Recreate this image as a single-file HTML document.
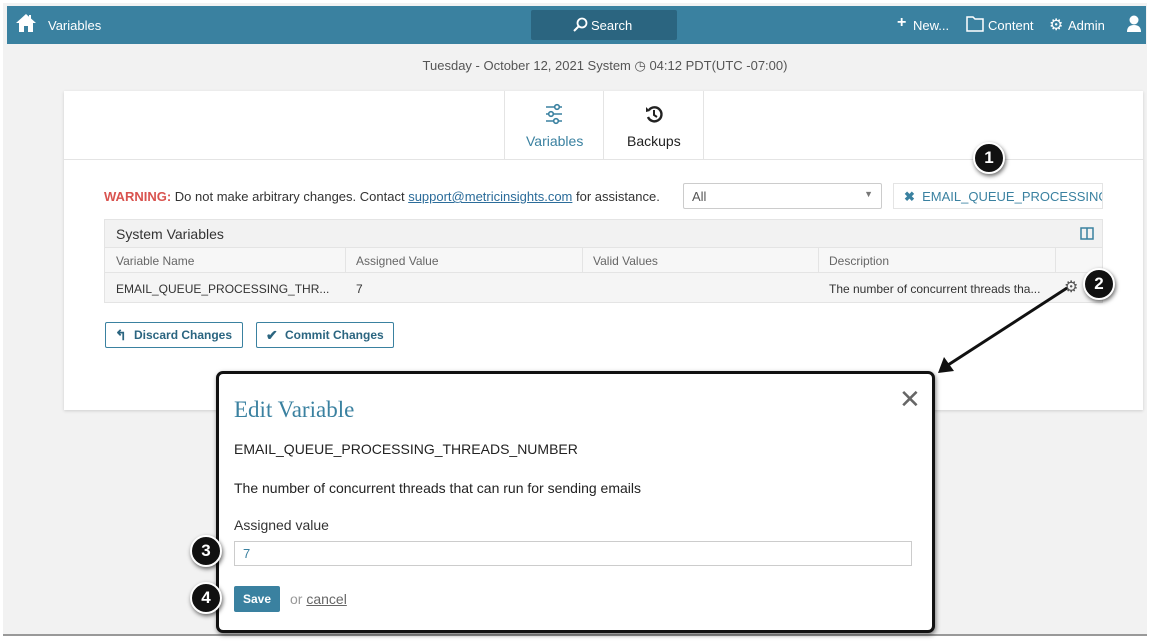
<!DOCTYPE html>
<html><head><style>
*{box-sizing:border-box;margin:0;padding:0}
body{width:1151px;height:642px;overflow:hidden;background:#fff;font-family:"Liberation Sans",sans-serif;position:relative}
.frame{position:absolute;left:3px;top:3px;width:1144px;height:633px;background:#f2f2f2;border-bottom:2px solid #999}
.nav{position:absolute;left:7px;top:6px;width:1139px;height:38px;background:#3a81a0;color:#fff;font-size:13px}
.nav span{position:absolute;top:12px}
.search{position:absolute;left:524px;top:4px;width:146px;height:30px;background:#2b6580;border-radius:2px}
.abs{position:absolute}
.card{position:absolute;left:64px;top:91px;width:1079px;height:319px;background:#fff;box-shadow:0 1px 3px rgba(0,0,0,.15)}
.circ{position:absolute;width:32px;height:32px;border-radius:50%;background:#111;border:2px solid #fff;box-shadow:1px 2px 4px rgba(0,0,0,.6);color:#fff;font-weight:bold;font-size:17px;text-align:center;line-height:28px}
.btn{position:absolute;height:26px;border:1px solid #3a81a0;border-radius:2px;color:#2b6580;font-size:12px;font-weight:bold;line-height:24px;padding-left:28px;background:#fff}
</style></head><body>
<div class="frame"></div>
<div class="nav">
<svg class="abs" style="left:8px;top:7px" width="22" height="20" viewBox="0 0 22 20"><path d="M11 1 L1 10 L4 10 L4 19 L9 19 L9 13 L13 13 L13 19 L18 19 L18 10 L21 10 L16 5.5 L16 2 L14 2 L14 3.7Z" fill="#fff"/></svg>
<span style="left:41px">Variables</span>
<div class="search"><svg class="abs" style="left:41px;top:7px" width="16" height="16"><circle cx="10" cy="6" r="4.5" stroke="#fff" stroke-width="1.8" fill="none"/><path d="M7 9 L2 14" stroke="#fff" stroke-width="2"/></svg><span style="left:60px;top:8px;position:absolute">Search</span></div>
<span style="left:890px;font-size:16px;top:8px;font-weight:bold">+</span><span style="left:906px">New...</span>
<svg class="abs" style="left:959px;top:10px" width="18" height="16"><path d="M1 1h6l2 2h8v12H1z" stroke="#fff" stroke-width="1.5" fill="none"/></svg><span style="left:981px">Content</span>
<span style="left:1042px;top:9px;font-size:16px">⚙</span><span style="left:1061px">Admin</span>
<svg class="abs" style="left:1119px;top:9px" width="16" height="18"><circle cx="8" cy="5" r="4.5" fill="#fff"/><path d="M1 17 Q1 10 8 10 Q15 10 15 17Z" fill="#fff"/></svg>
</div>
<div class="abs" style="left:0;width:1210px;text-align:center;top:58px;font-size:13px;color:#555">Tuesday - October 12, 2021 System ◷ 04:12 PDT(UTC -07:00)</div>
<div class="card">
<div class="abs" style="left:0;top:68px;width:1079px;border-top:1px solid #e4e4e4"></div>
<div class="abs" style="left:440px;top:0;width:1px;height:68px;background:#e4e4e4"></div>
<div class="abs" style="left:539px;top:0;width:1px;height:68px;background:#e4e4e4"></div>
<div class="abs" style="left:639px;top:0;width:1px;height:68px;background:#e4e4e4"></div>
<svg class="abs" style="left:480px;top:12px" width="20" height="22" stroke="#3a81a0" stroke-width="1.6" fill="none"><path d="M2 4h16M2 11h16M2 18h16"/><circle cx="13" cy="4" r="2.3" fill="#fff"/><circle cx="7" cy="11" r="2.3" fill="#fff"/><circle cx="12" cy="18" r="2.3" fill="#fff"/></svg>
<div class="abs" style="left:462px;top:42px;font-size:14px;color:#3a81a0">Variables</div>
<svg class="abs" style="left:580px;top:13px" width="20" height="20"><path d="M5 6 A7 7 0 1 1 4 13" stroke="#222" stroke-width="2.4" fill="none"/><path d="M2 3 L6 7 L2 8Z" fill="#222"/><path d="M10 6v5l3 2" stroke="#222" stroke-width="2" fill="none"/></svg>
<div class="abs" style="left:563px;top:42px;font-size:14px;color:#222">Backups</div>
<div class="abs" style="left:40px;top:98px;font-size:13px;color:#333"><b style="color:#d9534f">WARNING:</b> Do not make arbitrary changes. Contact <u style="color:#2b6c9a">support@metricinsights.com</u> for assistance.</div>
<div class="abs" style="left:619px;top:92px;width:199px;height:26px;border:1px solid #ccc;border-radius:2px;font-size:13px;color:#555;padding:5px 8px">All<span style="position:absolute;right:8px;top:5px;font-size:9px;color:#777">▼</span></div>
<div class="abs" style="left:829px;top:92px;width:210px;height:26px;border:1px solid #e4e4e4;font-size:13px;color:#3a81a0;padding:5px 10px;overflow:hidden;white-space:nowrap"><b>✖</b>&nbsp; EMAIL_QUEUE_PROCESSING</div>
<div class="abs" style="left:40px;top:128px;width:999px;height:84px;border:1px solid #e4e4e4">
<div style="height:28px;background:#f2f2f2;border-bottom:1px solid #e4e4e4;font-size:14px;color:#333;padding:6px 11px">System Variables</div>
<svg class="abs" style="right:8px;top:7px" width="14" height="13"><rect x="1" y="1" width="12" height="11" stroke="#3a81a0" stroke-width="1.5" fill="none"/><path d="M7 1v11" stroke="#3a81a0" stroke-width="1.5"/></svg>
<div style="height:25px;background:#f7f7f7;border-bottom:1px solid #e4e4e4;font-size:12px;color:#666;position:relative">
<span class="abs" style="left:11px;top:6px">Variable Name</span><span class="abs" style="left:251px;top:6px">Assigned Value</span><span class="abs" style="left:488px;top:6px">Valid Values</span><span class="abs" style="left:724px;top:6px">Description</span>
<div class="abs" style="left:240px;top:0;width:1px;height:25px;background:#e4e4e4"></div><div class="abs" style="left:477px;top:0;width:1px;height:25px;background:#e4e4e4"></div><div class="abs" style="left:713px;top:0;width:1px;height:25px;background:#e4e4e4"></div><div class="abs" style="left:950px;top:0;width:1px;height:25px;background:#e4e4e4"></div></div>
<div style="height:29px;background:#f5f5f5;font-size:12px;color:#333;position:relative">
<span class="abs" style="left:11px;top:9px">EMAIL_QUEUE_PROCESSING_THR...</span><span class="abs" style="left:251px;top:9px">7</span><span class="abs" style="left:724px;top:9px">The number of concurrent threads tha...</span><span class="abs" style="left:959px;top:4px;font-size:16px;color:#555">⚙</span></div>
</div>
<div class="btn" style="left:41px;top:231px;width:138px"><span class="abs" style="left:9px;top:0;font-size:14px">↰</span>Discard Changes</div>
<div class="btn" style="left:192px;top:231px;width:138px"><span class="abs" style="left:9px;top:0;font-size:14px">✔</span>Commit Changes</div>
</div>
<svg class="abs" style="left:930px;top:285px" width="140" height="95"><path d="M137 3 L18 80" stroke="#111" stroke-width="3"/><path d="M8 88 L14 72 L24 86Z" fill="#111"/></svg>
<div class="abs" style="left:216px;top:371px;width:719px;height:262px;background:#fff;border:3px solid #111;border-radius:7px;box-shadow:1px 2px 5px rgba(0,0,0,.5)">
<div class="abs" style="left:15px;top:23px;font-family:'Liberation Serif',serif;font-size:23px;color:#3a81a0">Edit Variable</div>
<div class="abs" style="left:680px;top:10px;font-size:26px;color:#666">✕</div>
<div class="abs" style="left:15px;top:67px;font-size:14px;color:#222">EMAIL_QUEUE_PROCESSING_THREADS_NUMBER</div>
<div class="abs" style="left:15px;top:106px;font-size:14px;color:#222">The number of concurrent threads that can run for sending emails</div>
<div class="abs" style="left:15px;top:143px;font-size:14px;color:#333">Assigned value</div>
<div class="abs" style="left:15px;top:167px;width:678px;height:25px;border:1px solid #ccc;font-size:13px;color:#3a81a0;padding:4px 8px">7</div>
<div class="abs" style="left:15px;top:212px;width:46px;height:26px;background:#3a81a0;border-radius:2px;color:#fff;font-size:12px;font-weight:bold;text-align:center;line-height:26px">Save</div>
<div class="abs" style="left:71px;top:217px;font-size:14px;color:#999">or <u style="color:#666">cancel</u></div>
</div>
<div class="circ" style="left:973px;top:142px">1</div>
<div class="circ" style="left:1083px;top:268px">2</div>
<div class="circ" style="left:190px;top:535px">3</div>
<div class="circ" style="left:190px;top:582px">4</div>
</body></html>
